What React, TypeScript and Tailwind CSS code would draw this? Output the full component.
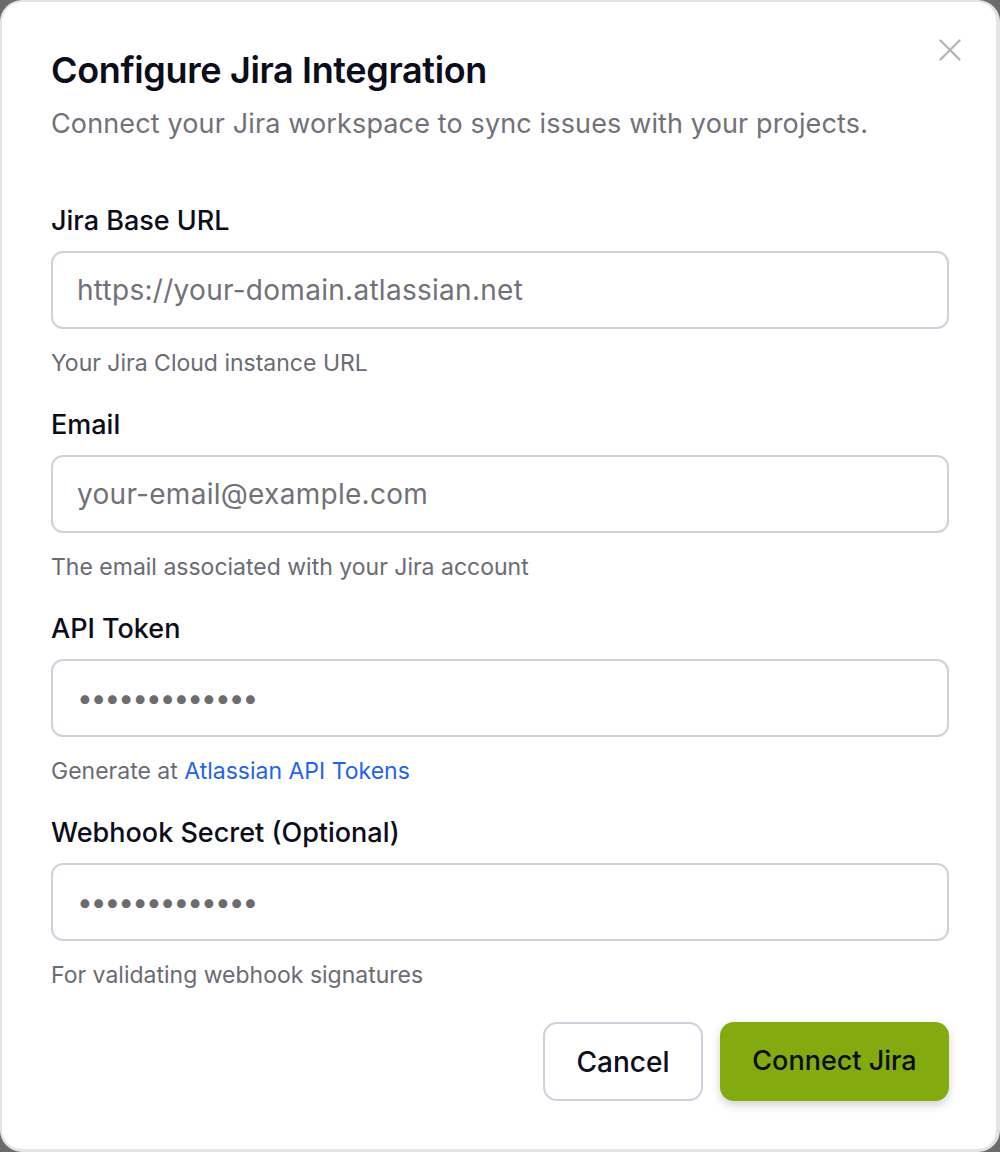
import { X } from "lucide-react";

const fields = [
  { label: "Jira Base URL", type: "text", placeholder: "https://your-domain.atlassian.net", help: "Your Jira Cloud instance URL" },
  { label: "Email", type: "email", placeholder: "your-email@example.com", help: "The email associated with your Jira account" },
  { label: "API Token", type: "password", value: "aaaaaaaaaaaaa", help: "Generate at", link: "Atlassian API Tokens" },
  { label: "Webhook Secret (Optional)", type: "password", value: "aaaaaaaaaaaaa", help: "For validating webhook signatures" },
];

export default function App() {
  return (
    <div className="w-[1000px] h-[1152px] bg-[#6b6b6b] font-[Inter,'Liberation_Sans',sans-serif]">
      <div className="relative h-full w-full rounded-[22px] border-t-2 border-l-2 border-r-4 border-b-[3px] border-[#e4e4e7] bg-white pl-[49px] pr-[47px] pt-[46px]">
        <button className="absolute right-[27px] top-[29px] text-[#b4b4b9]">
          <X size={38} strokeWidth={1.5} />
        </button>

        <h2 className="text-[36px] leading-[44px] font-semibold tracking-[-0.01em] text-[#0b0d1a]">Configure Jira Integration</h2>
        <p className="mt-[12px] text-[27px] leading-[40px] text-[#71717a] tracking-[0.005em]">
          Connect your Jira workspace to sync issues with your projects.
        </p>

        <div className="mt-[57px] flex flex-col gap-[26px]">
          {fields.map((f) => (
            <div key={f.label} className="flex flex-col">
              <label className="text-[27px] leading-[40px] font-medium text-[#0b0d1a]">{f.label}</label>
              <input
                type={f.type}
                placeholder={f.placeholder}
                defaultValue={f.value}
                readOnly
                className={
                  f.type === "password"
                    ? "mt-[10px] h-[78px] w-full rounded-[12px] border-2 border-[#cdd1dc] bg-white pl-[24px] text-[28px] text-[#6b6b70] outline-none tracking-[-0.07em]"
                    : "mt-[10px] h-[78px] w-full rounded-[12px] border-2 border-[#cdd1dc] bg-white pl-[24px] text-[28px] text-[#6b6b70] placeholder:text-[#71717a] outline-none tracking-[0.01em]"
                }
              />
              <p className="mt-[18px] text-[23px] leading-[32px] text-[#6b6b73]">
                {f.help}
                {f.link && <a className="text-[#1f63f0]"> {f.link}</a>}
              </p>
            </div>
          ))}
        </div>

        <div className="mt-[31px] flex justify-end gap-[17px]">
          <button className="h-[79px] w-[160px] rounded-[14px] border-2 border-[#cdd1dc] bg-white text-[28px] font-medium text-[#0b0d1a]">
            Cancel
          </button>
          <button className="h-[79px] w-[229px] rounded-[14px] bg-[#83ab0f] text-[27px] font-medium text-[#0b0d1a] shadow-[0_4px_10px_rgba(0,0,0,0.18)]">
            Connect Jira
          </button>
        </div>
      </div>
    </div>
  );
}
